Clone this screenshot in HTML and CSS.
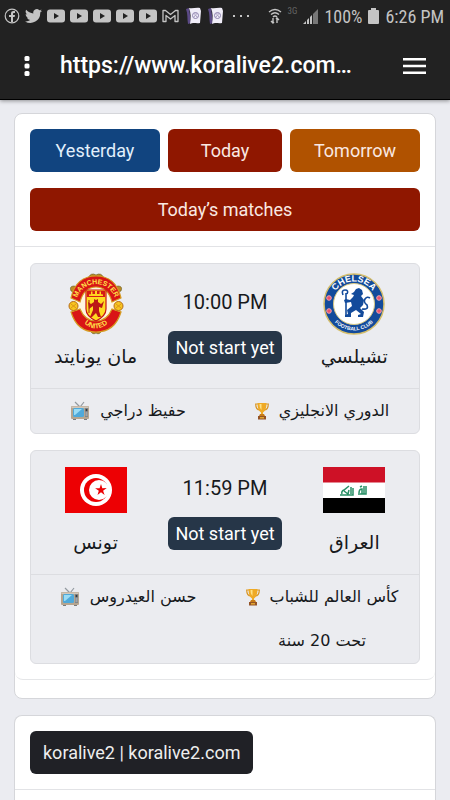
FILE: index.html
```html
<!DOCTYPE html>
<html lang="en">
<head>
<meta charset="utf-8">
<meta name="viewport" content="width=device-width, initial-scale=1">
<title>koralive2</title>
<link rel="stylesheet" href="styles.css">
</head>
<body>
<svg class="defs" width="0" height="0" aria-hidden="true">
  <symbol id="yt" viewBox="0 0 18 14"><rect y="0.5" width="18" height="13" rx="3" fill="#c4c4c4"/><path d="M7 4v6l5-3z" fill="#222"/></symbol>
  <symbol id="ball" viewBox="0 0 15 18"><path d="M0 2l3-1 2 15-3 1C1 12 2 7 0 2z" fill="#5b4a86"/><path d="M3 1c4 1 7-1 11 0l1 3-1 12c-4 1-6-1-10 1C5 11 5 6 3 1z" fill="#f0edf8"/><circle cx="9.500" cy="8.500" r="3" fill="none" stroke="#8c80ad"/><path d="M8 10l1.500-2 1.500 2M8 7h3" fill="none" stroke="#8c80ad" stroke-width=".7"/></symbol>
  <symbol id="tv" viewBox="0 0 20 20"><path d="M5 1l5 5 4-5" fill="none" stroke="#939aa0" stroke-width="1.200"/><path d="M3 17h3v2H3zM14 17h3v2h-3z" fill="#777a7d"/><rect x="1" y="5" width="18" height="13" rx="1" fill="#b6a58f"/><rect x="1.500" y="5.500" width="17" height="1.500" fill="#d1c8bc"/><rect x="3" y="7" width="11" height="9" rx="1.500" fill="#4fa9da"/><path d="M4 8h8L5 14H4z" fill="#9bdcf5"/><path d="M15 7h3v9h-3z" fill="#80868b"/><circle cx="16.500" cy="9" r="1" fill="#333"/><path d="M15.500 12h2M15.500 14h2" stroke="#ddd" stroke-width=".7"/></symbol>
  <symbol id="cup" viewBox="0 0 14 18"><path d="M3 2H.7c0 4 1.500 6 4.300 6M11 2h2.300c0 4-1.500 6-4.300 6" fill="none" stroke="#d99522" stroke-width="1.200"/><path d="M2.500 1h9c0 5-1 8-3.500 9.500V13H6v-2.500C3.500 9 2.500 6 2.500 1z" fill="#efaa25"/><path d="M4.500 2h2v6c-1.500-1.500-2-3-2-6z" fill="#ffe184"/><path d="M5 12h4l1 2H4z" fill="#c77b17"/><path d="M3 14h8v3.500H3z" fill="#945326"/><path d="M5 15h4v1.500H5z" fill="#e1a52d"/></symbol>
</svg>

<header class="browser">
  <div class="status">
    <div class="notices">
      <svg width="16" height="16" viewBox="0 0 16 16"><circle cx="8" cy="8" r="6.800" fill="none" stroke="#c4c4c4" stroke-width="1.200"/><path d="M7 14V9H5V7h2V5.500C7 3.800 8 3 9.300 3H11v2H9.800C9.200 5 9 5.300 9 5.800V7h2l-.4 2H9v5z" fill="#c4c4c4"/></svg>
      <svg width="17" height="16" viewBox="0 0 24 22"><path d="M24 3.600a9 9 0 0 1-2.800.8A5 5 0 0 0 23.300 1.700a10 10 0 0 1-3.100 1.200 4.900 4.900 0 0 0-8.400 4.500A14 14 0 0 1 1.700 2.300a4.900 4.900 0 0 0 1.500 6.500A5 5 0 0 1 1 8.200a4.900 4.900 0 0 0 3.900 4.900 5 5 0 0 1-2.200.1 4.900 4.900 0 0 0 4.600 3.400A10 10 0 0 1 0 18.600 14 14 0 0 0 21.500 6.100 10 10 0 0 0 24 3.600z" fill="#c4c4c4"/></svg>
      <svg width="18" height="14"><use href="#yt"/></svg>
      <svg width="18" height="14"><use href="#yt"/></svg>
      <svg width="18" height="14"><use href="#yt"/></svg>
      <svg width="18" height="14"><use href="#yt"/></svg>
      <svg width="18" height="14"><use href="#yt"/></svg>
      <svg width="17" height="14" viewBox="0 0 17 14"><path d="M1 1.500h2.500l5 4 5-4H16v11h-3V6.500L8.500 10 4 6.500v6H1z" fill="none" stroke="#c4c4c4" stroke-width="1.300" stroke-linejoin="round"/></svg>
      <svg class="ball" width="15" height="18"><use href="#ball"/></svg>
      <svg class="ball" width="15" height="18"><use href="#ball"/></svg>
      <svg class="more" width="16" height="4" viewBox="0 0 16 4"><path d="M0 1h2v2H0zM7 1h2v2H7zM14 1h2v2h-2z" fill="#c4c4c4"/></svg>
    </div>
    <div class="signals">
      <svg width="14" height="16" viewBox="0 0 14 16"><path d="M1 4q6-5 12 0M3 6.500q4-3.500 8 0M5 9q2-2 4 0" fill="none" stroke="#c4c4c4" stroke-width="1.400"/><path d="M5 10v5M3 13l2 2 1-1M9 15v-5M8 11l1-1 2 2" fill="none" stroke="#c4c4c4" stroke-width="1.400"/></svg>
      <span class="network">3G</span>
      <svg class="bars" width="15" height="15" viewBox="0 0 15 15"><path d="M0 15l3-3v3zM4 11l2-2v6H4zM7 8l2-2v9H7z" fill="#c4c4c4"/><path d="M10 5l5-5v15h-5z" fill="#777"/></svg>
      <span>100%</span>
      <svg width="11" height="16" viewBox="0 0 11 16"><path d="M3 0h5v2h2q1 0 1 1v12q0 1-1 1H1q-1 0-1-1V3q0-1 1-1h2z" fill="#c4c4c4"/></svg>
      <span>6:26 PM</span>
    </div>
  </div>
  <div class="toolbar">
    <button class="icon-button" aria-label="Options"><svg width="6" height="20" viewBox="0 0 6 20"><rect x=".5" width="5" height="5" rx="1.500" fill="#fff"/><rect x=".5" y="7.500" width="5" height="5" rx="1.500" fill="#fff"/><rect x=".5" y="15" width="5" height="5" rx="1.500" fill="#fff"/></svg></button>
    <span class="address">https://www.koralive2.com…</span>
    <button class="icon-button" aria-label="Menu"><svg width="23" height="16" viewBox="0 0 23 16"><path d="M0 1.200h23M0 8h23M0 14.800h23" stroke="#fff" stroke-width="2.400"/></svg></button>
  </div>
</header>

<main class="page">
  <section class="card">
    <div class="card-head">
      <nav class="days">
        <a class="button blue" href="#yesterday">Yesterday</a>
        <a class="button red" href="#today">Today</a>
        <a class="button orange" href="#tomorrow">Tomorrow</a>
      </nav>
      <h1 class="button red">Today’s matches</h1>
    </div>
    <div class="matches" id="today">
      <article class="match">
        <div class="teams">
          <div class="team">
            <svg class="crest" width="62" height="62" viewBox="0 0 62 62" role="img" aria-label="Manchester United">
              <defs><path id="mu-top" d="M11.500 27A20 20.500 0 0 1 50.500 27"/><path id="mu-bottom" d="M11 41Q31 70 51 41"/></defs>
              <g fill="#bc8b26" stroke="#615a1c" stroke-width=".6"><path d="M23 5q3-6 8-3 5-3 8 3l-1 5H24zM9 13q-5 0-3 5l5 2 5-5zM53 13q5 0 3 5l-5 2-5-5zM24 55q3 8 7 5 4 3 7-5z"/></g>
              <circle cx="31" cy="31" r="22" fill="#fff4df"/>
              <path d="M6 25Q11 3 31 3t25 22l-9 4Q43 14 31 14T15 29z" fill="#d91516" stroke="#d69c21" stroke-width="1.200"/>
              <path d="M6 39l9-3q5 12 16 12t16-12l9 3Q50 59 31 59T6 39z" fill="#d91516" stroke="#d69c21" stroke-width="1.200"/>
              <circle cx="8.500" cy="33" r="4.500" fill="#f7c51f" stroke="#b66a18"/><circle cx="53.500" cy="33" r="4.500" fill="#f7c51f" stroke="#b66a18"/>
              <path d="M6 31l5 4m0-4l-5 4M51 31l5 4m0-4l-5 4" stroke="#d58a17" stroke-width=".8"/>
              <path d="M21 17h20v19q0 7-10 12-10-5-10-12z" fill="#ffdb20" stroke="#c71414" stroke-width="1.200"/>
              <path d="M22 18h18v6H22z" fill="#d71a17"/><path d="M24 21.500q7-1.500 14 0V23H24zM26 18.500h1.500v3H26zM30 18h2v4h-2zM34.500 18.500H36v3h-1.500z" fill="#ffd51f"/>
              <path d="M29 26l2 1 2-1v3l3 2 3-3-2 7-3-1v4l2 6h-3l-2-4-4 4h-2l3-7v-4l-4 3-1-7 3 2 3-2z" fill="#bc1716"/><path d="M24 27v13" stroke="#a91d12"/>
              <text class="mu-text"><textPath href="#mu-top" startOffset="50%" text-anchor="middle">MANCHESTER</textPath></text>
              <text class="mu-text"><textPath href="#mu-bottom" startOffset="50%" text-anchor="middle">UNITED</textPath></text>
            </svg>
            <h2 class="name" lang="ar" dir="rtl">مان يونايتد</h2>
          </div>
          <div class="kickoff"><time>10:00 PM</time><span class="badge">Not start yet</span></div>
          <div class="team">
            <svg class="crest" width="62" height="62" viewBox="0 0 62 62" role="img" aria-label="Chelsea">
              <defs><path id="ch-top" d="M8.500 31A22.500 22.500 0 0 1 53.500 31"/><path id="ch-bottom" d="M4.500 31A26.500 26.500 0 0 0 57.500 31"/></defs>
              <circle cx="31" cy="31" r="30" fill="#134b9b" stroke="#d5be6b" stroke-width="1.500"/><circle cx="31" cy="31" r="20.500" fill="#fff" stroke="#d9c983"/>
              <g fill="#e9536d" stroke="#f3a3ae" stroke-width="1"><circle cx="6" cy="25" r="2.300"/><circle cx="6" cy="38" r="2.300"/><circle cx="56" cy="25" r="2.300"/><circle cx="56" cy="38" r="2.300"/></g>
              <path d="M31 19l2-3 3-1 3 2 1 4-2 2 3 4-1 5-3 3 4 4-1 5h-5v-2l3-1-5-4-5 3v4h-6v-2l3-1-1-4 5-4-1-4-6 1-1-3 2-1 4 1 3-3 1-2-3-1z" fill="#134b9b"/>
              <path d="M39 36q7 1 5-4-4-3-2-6t5-1M23 20v24M20 22q-2-5 2-5t2 4" fill="none" stroke="#134b9b" stroke-width="1.600"/>
              <text class="ch-text"><textPath href="#ch-top" startOffset="50%" text-anchor="middle">CHELSEA</textPath></text>
              <text class="ch-small"><textPath href="#ch-bottom" startOffset="50%" text-anchor="middle">FOOTBALL CLUB</textPath></text>
            </svg>
            <h2 class="name" lang="ar" dir="rtl">تشيلسي</h2>
          </div>
        </div>
        <div class="details">
          <p class="detail"><svg width="20" height="20"><use href="#tv"/></svg><span lang="ar" dir="rtl">حفيظ دراجي</span></p>
          <p class="detail"><svg width="14" height="18"><use href="#cup"/></svg><span lang="ar" dir="rtl">الدوري الانجليزي</span></p>
        </div>
      </article>
      <article class="match">
        <div class="teams flags">
          <div class="team">
            <svg class="crest" width="62" height="46" viewBox="0 0 62 46" role="img" aria-label="Tunisia"><path d="M0 0h62v46H0z" fill="#ed0003"/><circle cx="31" cy="23" r="16" fill="#fff"/><circle cx="31" cy="23" r="12" fill="#ed0003"/><circle cx="34" cy="23" r="10" fill="#fff"/><path d="M36 17l1.300 4.200 4.400-.1-3.600 2.600 1.500 4.200-3.600-2.600-3.500 2.700 1.300-4.300-3.700-2.500h4.500z" fill="#ed0003"/></svg>
            <h2 class="name" lang="ar" dir="rtl">تونس</h2>
          </div>
          <div class="kickoff"><time>11:59 PM</time><span class="badge">Not start yet</span></div>
          <div class="team">
            <svg class="crest" width="62" height="46" viewBox="0 0 62 46" role="img" aria-label="Iraq"><path d="M0 0h62v46H0z" fill="#fff"/><path d="M0 0h62v15.500H0z" fill="#ce1126"/><path d="M0 31h62v15H0z" fill="#000"/><path d="M17 28h13v-7M19 27q-1-3 2-4l5-4M21 24l4 3 1-4M28 20v7M35 27h8v-8M36 26q0-4 3-4v5M41 19v8M37 20l2-1" fill="none" stroke="#288f65" stroke-width="1.500"/></svg>
            <h2 class="name" lang="ar" dir="rtl">العراق</h2>
          </div>
        </div>
        <div class="details">
          <p class="detail"><svg width="20" height="20"><use href="#tv"/></svg><span lang="ar" dir="rtl">حسن العيدروس</span></p>
          <p class="detail"><svg width="14" height="18"><use href="#cup"/></svg><span lang="ar" dir="rtl">كأس العالم للشباب</span><span class="second-line" lang="ar" dir="rtl">تحت 20 سنة</span></p>
        </div>
      </article>
    </div>
  </section>
  <section class="card about">
    <div class="card-head"><a class="button dark" href="#home">koralive2 | koralive2.com</a></div>
  </section>
</main>
</body>
</html>
```
FILE: styles.css
```css
* { box-sizing: border-box; }
body {
  margin: 0;
  min-height: 100vh;
  display: flex;
  flex-direction: column;
  background: #ebecf1;
  color: #17191c;
  font-family: Roboto, "DejaVu Sans", sans-serif;
}
svg { display: block; flex: none; }
.defs { position: absolute; }
h1, h2, p { margin: 0; font-weight: 400; }

.browser {
  background: #222;
  color: #fff;
  border-bottom: 1px solid #000;
  box-shadow: 0 1px 4px rgba(0, 0, 0, .4);
}
.status {
  display: flex;
  justify-content: space-between;
  align-items: center;
  height: 32px;
  padding: 0 6px 0 4px;
}
.notices { display: flex; align-items: center; gap: 5px; }
.ball { margin-left: 2px; }
.more { margin-left: 5px; }
.signals {
  display: flex;
  align-items: center;
  gap: 6px;
  color: #c4c4c4;
  font-family: "Roboto Condensed", Roboto, sans-serif;
  font-size: 18px;
  white-space: nowrap;
}
.network { align-self: flex-start; color: #666; font-size: 9px; }
.toolbar {
  display: flex;
  align-items: center;
  height: 67px;
  padding: 0 20px;
}
.icon-button {
  display: flex;
  padding: 4px;
  border: 0;
  background: none;
}
.address {
  flex: 1;
  padding-left: 26px;
  font-size: 23px;
  font-weight: 500;
  white-space: nowrap;
}

.page {
  flex: 1;
  display: flex;
  flex-direction: column;
  gap: 16px;
  padding: 13px 14px 0;
}
.card {
  border: 1px solid #d5d6da;
  border-radius: 8px;
  background: #fff;
  padding-bottom: 18px;
}
.about {
  flex: 1;
  border-bottom: 0;
  border-radius: 8px 8px 0 0;
}
.card-head {
  display: flex;
  flex-direction: column;
  align-items: stretch;
  gap: 16px;
  padding: 15px;
  border-bottom: 1px solid #e2e3e6;
}
.about .card-head { align-items: flex-start; }
.days {
  display: grid;
  grid-template-columns: 130fr 114fr 130fr;
  gap: 8px;
}
.button {
  padding: 0 13px;
  border-radius: 6px;
  color: #fae9e2;
  font-size: 18px;
  line-height: 43px;
  text-align: center;
  text-decoration: none;
}
.blue { background: #11447f; color: #e2f0fc; }
.red { background: #8f1700; }
.orange { background: #b05200; }
.dark { background: #202126; color: #eee; }

.matches {
  display: flex;
  flex-direction: column;
  gap: 16px;
  padding: 16px 15px 15px;
  border-bottom: 1px solid #e5e6e8;
  border-radius: 0 0 8px 8px;
}
.match {
  border: 1px solid #dcdde1;
  border-radius: 6px;
  background: #ebecf0;
}
.teams {
  display: grid;
  grid-template-columns: repeat(3, 1fr);
  padding: 9px 0 14px;
}
.flags { padding-top: 16px; }
.team, .kickoff { display: flex; flex-direction: column; align-items: center; }
.name {
  margin-top: 4px;
  font-family: "DejaVu Sans", sans-serif;
  font-size: 19px;
  line-height: 35px;
}
.flags .name { margin-top: 12px; }
.kickoff { padding-top: 14px; gap: 14px; }
.flags .kickoff { padding-top: 6px; }
time { font-size: 20px; line-height: 30px; white-space: nowrap; }
.badge {
  padding: 0 7px;
  border-radius: 6px;
  background: #263648;
  color: #fff;
  font-size: 18px;
  line-height: 33px;
  white-space: nowrap;
}
.details {
  display: grid;
  grid-template-columns: 1fr 1fr;
  border-top: 1px solid #dcdde1;
}
.detail {
  display: flex;
  flex-wrap: wrap;
  align-content: flex-start;
  align-items: center;
  justify-content: center;
  column-gap: 10px;
  font-family: "DejaVu Sans", sans-serif;
  font-size: 16px;
  line-height: 44px;
  white-space: nowrap;
}
.second-line { flex-basis: 100%; text-align: center; }

.mu-text, .ch-text, .ch-small { font-family: "Liberation Sans", sans-serif; font-weight: 700; }
.mu-text { font-size: 7px; fill: #ffe04a; }
.ch-text { font-size: 9px; fill: #fff; }
.ch-small { font-size: 5px; fill: #fff; }
```
